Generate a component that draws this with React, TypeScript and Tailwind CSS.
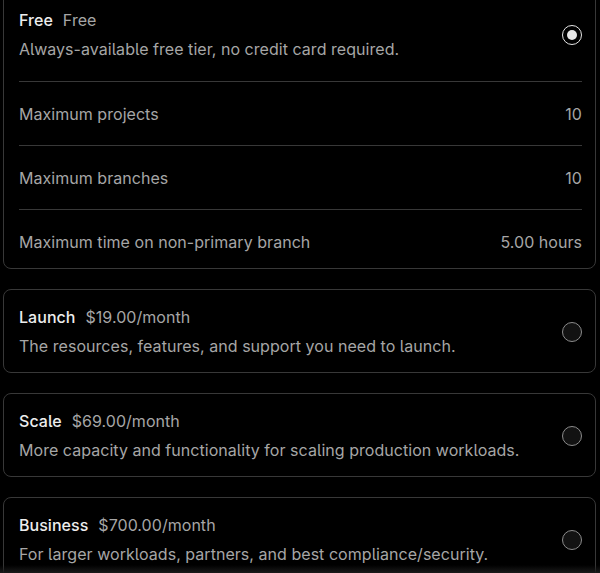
import React from "react";

type Plan = { name: string; price: string; desc: string };

const plans: Plan[] = [
  { name: "Launch", price: "$19.00/month", desc: "The resources, features, and support you need to launch." },
  { name: "Scale", price: "$69.00/month", desc: "More capacity and functionality for scaling production workloads." },
  { name: "Business", price: "$700.00/month", desc: "For larger workloads, partners, and best compliance/security." },
];

function Radio({ checked }: { checked?: boolean }) {
  if (checked) {
    return (
      <div className="flex h-5 w-5 shrink-0 items-center justify-center rounded-full border-[1.5px] border-[#e6e6e6] bg-black">
        <div className="h-[10px] w-[10px] rounded-full bg-[#e6e6e6]" />
      </div>
    );
  }
  return <div className="h-5 w-5 shrink-0 rounded-full border-[1.5px] border-[#8c8c8c] bg-[#121212]" />;
}

function Header({ name, price, desc, checked }: Plan & { checked?: boolean }) {
  return (
    <div className="flex items-center justify-between">
      <div className="flex flex-col gap-[5px]">
        <div className="flex items-baseline gap-[10px] text-[16px] leading-6">
          <span className="font-[450] text-[#ededed]">{name}</span>
          <span className="text-[#a6a6a6]">{price}</span>
        </div>
        <div className="text-[16px] leading-6 text-[#a6a6a6]">{desc}</div>
      </div>
      <Radio checked={checked} />
    </div>
  );
}

const rows = [
  ["Maximum projects", "10"],
  ["Maximum branches", "10"],
  ["Maximum time on non-primary branch", "5.00 hours"],
];

export default function App() {
  return (
    <div
      className="relative h-[573px] w-[600px] overflow-hidden bg-black tracking-[0.04px] [font-feature-settings:'cv05']"
      style={{ fontFamily: "Inter, 'Noto Sans', sans-serif" }}
    >
      <div className="mt-[-8px] flex flex-col gap-5 pl-[3px] pr-[4px]">
        <div className="rounded-lg border border-[#383838] pl-[15px] pr-[13px] pt-[15px]">
          <div className="border-b border-[#383838] pb-5">
            <Header name="Free" price="Free" desc="Always-available free tier, no credit card required." checked />
          </div>
          {rows.map(([label, value], i) => (
            <div
              key={label}
              className={`flex items-center justify-between pt-5 text-[16px] leading-6 text-[#a6a6a6] ${
                i < rows.length - 1 ? "border-b border-[#383838] pb-[19px]" : "pb-[14px]"
              }`}
            >
              <span>{label}</span>
              <span>{value}</span>
            </div>
          ))}
        </div>
        {plans.map((p) => (
          <div key={p.name} className="rounded-lg border border-[#383838] pb-[14px] pl-[15px] pr-[13px] pt-[15px]">
            <Header {...p} />
          </div>
        ))}
      </div>
      <div className="pointer-events-none absolute bottom-0 left-0 right-0 h-[8px] bg-gradient-to-b from-transparent to-[#1a1a1a]" />
    </div>
  );
}
